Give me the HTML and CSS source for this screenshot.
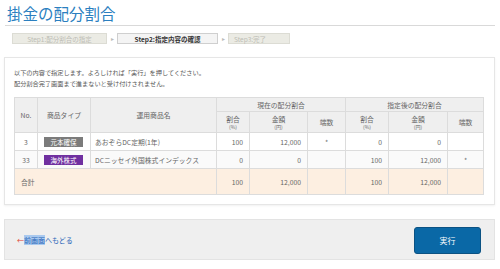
FILE: index.html
```html
<!DOCTYPE html>
<html lang="ja">
<head>
    <meta charset="UTF-8">
    <title>掛金の配分割合</title>
    <link rel="stylesheet" href="styles.css">
</head>
<body>
    <div class="page">
        <h1 class="page-title">掛金の配分割合</h1>

        <div class="steps">
            <div class="step">Step1:配分割合の指定</div>
            <span class="step-arrow">&#9656;</span>
            <div class="step step-current">Step2:指定内容の確認</div>
            <span class="step-arrow">&#9656;</span>
            <div class="step step-last">Step3:完了</div>
        </div>

        <div class="content">
            <p class="note">
                以下の内容で指定します。よろしければ「実行」を押してください。<br>
                配分割合完了画面まで進まないと受け付けされません。
            </p>

            <table class="alloc-table">
                <colgroup>
                    <col style="width: 23px">
                    <col style="width: 53px">
                    <col style="width: 126px">
                    <col style="width: 33px">
                    <col style="width: 58px">
                    <col style="width: 38px">
                    <col style="width: 43px">
                    <col style="width: 59px">
                    <col style="width: 36px">
                </colgroup>
                <thead>
                    <tr class="head-top">
                        <th rowspan="2">No.</th>
                        <th rowspan="2">商品タイプ</th>
                        <th rowspan="2">運用商品名</th>
                        <th colspan="3">現在の配分割合</th>
                        <th colspan="3">指定後の配分割合</th>
                    </tr>
                    <tr class="head-sub">
                        <th>割合<span class="unit">(%)</span></th>
                        <th>金額<span class="unit">(円)</span></th>
                        <th>端数</th>
                        <th>割合<span class="unit">(%)</span></th>
                        <th>金額<span class="unit">(円)</span></th>
                        <th>端数</th>
                    </tr>
                </thead>
                <tbody>
                    <tr>
                        <td class="center">3</td>
                        <td><span class="badge badge-gray">元本確保</span></td>
                        <td class="name">あおぞらDC定期(1年)</td>
                        <td class="num">100</td>
                        <td class="num">12,000</td>
                        <td class="center">*</td>
                        <td class="num">0</td>
                        <td class="num">0</td>
                        <td class="center"></td>
                    </tr>
                    <tr class="row-alt">
                        <td class="center">33</td>
                        <td><span class="badge badge-purple">海外株式</span></td>
                        <td class="name">DCニッセイ外国株式インデックス</td>
                        <td class="num">0</td>
                        <td class="num">0</td>
                        <td class="center"></td>
                        <td class="num">100</td>
                        <td class="num">12,000</td>
                        <td class="center">*</td>
                    </tr>
                    <tr class="row-total">
                        <td colspan="3" class="total-label">合計</td>
                        <td class="num">100</td>
                        <td class="num">12,000</td>
                        <td></td>
                        <td class="num">100</td>
                        <td class="num">12,000</td>
                        <td></td>
                    </tr>
                </tbody>
            </table>
        </div>

        <div class="footer">
            <a class="back-link" href="#"><span class="back-arrow">&larr;</span><span class="sel">前画面</span>へもどる</a>
            <button class="run-button">実行</button>
        </div>
    </div>
</body>
</html>
```

FILE: styles.css
```css
body {
    margin: 0;
    background: #fff;
    font-family: "Noto Sans CJK JP", "Noto Sans", sans-serif;
    color: #555;
}

.page {
    width: 491px;
    margin-left: 4px;
}

.page-title {
    margin: 0 0 0 1px;
    padding: 3px 0 0 2px;
    height: 22px;
    font-size: 15.5px;
    line-height: 20px;
    font-weight: normal;
    color: #2b7fbf;
    border-bottom: 1px solid #d9d9d9;
}

.steps {
    display: flex;
    align-items: center;
    margin: 6px 0 0 8px;
    height: 12px;
}

.step {
    width: 95px;
    height: 11px;
    line-height: 11px;
    font-size: 6.5px;
    color: #bdbdb5;
    background: #ebebe4;
    border: 1px solid #dcdcd4;
    box-sizing: border-box;
    text-align: center;
}

.step-current {
    width: 101px;
    color: #333;
    font-weight: bold;
    background: #f4f4f4;
    border-color: #cfcfcf;
}

.step-last {
    width: 62px;
    text-align: left;
    padding-left: 5px;
}

.step-arrow {
    width: 10px;
    font-size: 6px;
    color: #bbb;
    text-align: center;
}

.content {
    margin-top: 13px;
    border: 1px solid #e6e6e6;
    box-shadow: 0 1px 2px rgba(0, 0, 0, 0.06);
    padding: 9px 11px 9px 9px;
}

.note {
    margin: 0 0 8px;
    font-size: 6.2px;
    line-height: 11px;
    color: #555;
}

.alloc-table {
    width: 469px;
    border-collapse: collapse;
    table-layout: fixed;
    font-size: 6.8px;
    color: #666;
}

.alloc-table th,
.alloc-table td {
    border: 1px solid #dcdcdc;
    padding: 0;
}

.alloc-table th {
    background: #efefef;
    font-weight: normal;
    color: #666;
    text-align: center;
}

.head-top th {
    height: 13px;
}

.head-sub th {
    height: 20px;
    line-height: 9px;
}

.unit {
    display: block;
    font-size: 5px;
    line-height: 6px;
}

.alloc-table tbody td {
    height: 17px;
}

.row-alt td {
    background: #fafafa;
}

.center {
    text-align: center;
}

.num {
    text-align: right;
    padding-right: 6px !important;
}

.name {
    padding-left: 4px !important;
}

.badge {
    display: block;
    width: 39px;
    height: 10px;
    line-height: 10px;
    margin-left: 6px;
    color: #fff;
    text-align: center;
    font-size: 6.5px;
}

.badge-gray {
    background: #7b7b7b;
}

.badge-purple {
    background: #7030a0;
}

.row-total td {
    height: 25px !important;
    background: #fdefe1;
}

.total-label {
    padding-left: 6px !important;
}

.footer {
    display: flex;
    justify-content: space-between;
    align-items: center;
    margin-top: 14px;
    height: 41px;
    background: #efefef;
    border: 1px solid #e3e3e3;
    box-sizing: border-box;
    padding: 0 13px 0 12px;
}

.back-link {
    font-size: 7px;
    color: #2a66b8;
    text-decoration: none;
}

.back-arrow {
    color: #e04030;
}

.sel {
    background: #a9c9ef;
}

.run-button {
    width: 67px;
    height: 27px;
    margin-top: 1px;
    border: 1px solid #0b5283;
    border-radius: 3px;
    background: #0a68a6;
    color: #fff;
    font-family: inherit;
    font-size: 8px;
    cursor: pointer;
}
```
